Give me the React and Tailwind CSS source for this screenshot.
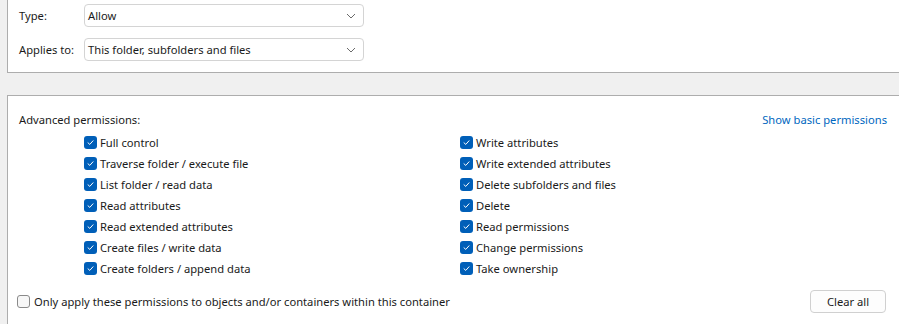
import { Fragment } from 'react';

const leftPerms = [
    'Full control',
    'Traverse folder / execute file',
    'List folder / read data',
    'Read attributes',
    'Read extended attributes',
    'Create files / write data',
    'Create folders / append data',
];

const rightPerms = [
    'Write attributes',
    'Write extended attributes',
    'Delete subfolders and files',
    'Delete',
    'Read permissions',
    'Change permissions',
    'Take ownership',
];

function Check({ checked }) {
    if (!checked) {
        return <span className="w-[13px] h-[13px] rounded-[3px] border border-[#8a8a8a] bg-[#f7f7f7] shrink-0" />;
    }
    return (
        <span className="w-[13px] h-[13px] rounded-[3px] bg-[#005fb8] flex items-center justify-center shrink-0">
            <svg width="9" height="9" viewBox="0 0 9 9" fill="none">
                <path d="M2 4.8 L3.8 6.4 L7 2.8" stroke="#ffffff" strokeWidth="1" strokeLinecap="round" strokeLinejoin="round" />
            </svg>
        </span>
    );
}

function Combo({ value }) {
    return (
        <div className="w-[280px] h-[23px] bg-white border border-[#d4d4d4] rounded-[4px] flex items-center justify-between pl-[3px] pr-[7px]">
            <span>{value}</span>
            <svg width="10" height="6" viewBox="0 0 10 6" fill="none">
                <path d="M1 1 L5 5 L9 1" stroke="#6a6a6a" strokeWidth="1" />
            </svg>
        </div>
    );
}

export default function App() {
    return (
        <div className="w-[899px] h-[324px] bg-[#f0f0f0] overflow-hidden flex flex-col text-[11.2px] text-[#1a1a1a] font-['Noto_Sans','Liberation_Sans',sans-serif] leading-[16px]">
            {/* top section */}
            <div className="ml-[7px] h-[73px] bg-white border-l border-b border-[#adadad] pt-[4px] pl-[11px] flex flex-col gap-[11px]">
                <div className="flex items-center">
                    <span className="w-[65px]">Type:</span>
                    <Combo value="Allow" />
                </div>
                <div className="flex items-center">
                    <span className="w-[65px]">Applies to:</span>
                    <Combo value="This folder, subfolders and files" />
                </div>
            </div>

            {/* advanced permissions */}
            <div className="ml-[7px] mt-[22px] flex-1 bg-white border-l border-t border-[#adadad] pt-[16px] flex flex-col">
                <div className="flex justify-between pl-[11px] pr-[12px]">
                    <span>Advanced permissions:</span>
                    <span className="text-[#0067c0]">Show basic permissions</span>
                </div>
                <div className="mt-[4px] ml-[76px] grid grid-cols-[376px_1fr]">
                    {leftPerms.map((p, i) => (
                        <Fragment key={p}>
                            <div className="h-[21px] flex items-center gap-[3px]">
                                <Check checked />
                                <span>{p}</span>
                            </div>
                            <div className="h-[21px] flex items-center gap-[3px]">
                                <Check checked />
                                <span>{rightPerms[i]}</span>
                            </div>
                        </Fragment>
                    ))}
                </div>
                <div className="mt-[11px] flex items-center justify-between pl-[9px] pr-[13px]">
                    <div className="flex items-center gap-[4px]">
                        <Check checked={false} />
                        <span>Only apply these permissions to objects and/or containers within this container</span>
                    </div>
                    <button className="w-[76px] h-[23px] bg-[#fdfdfd] border border-[#d0d0d0] rounded-[4px] text-[#1a1a1a]">
                        Clear all
                    </button>
                </div>
            </div>
        </div>
    );
}
